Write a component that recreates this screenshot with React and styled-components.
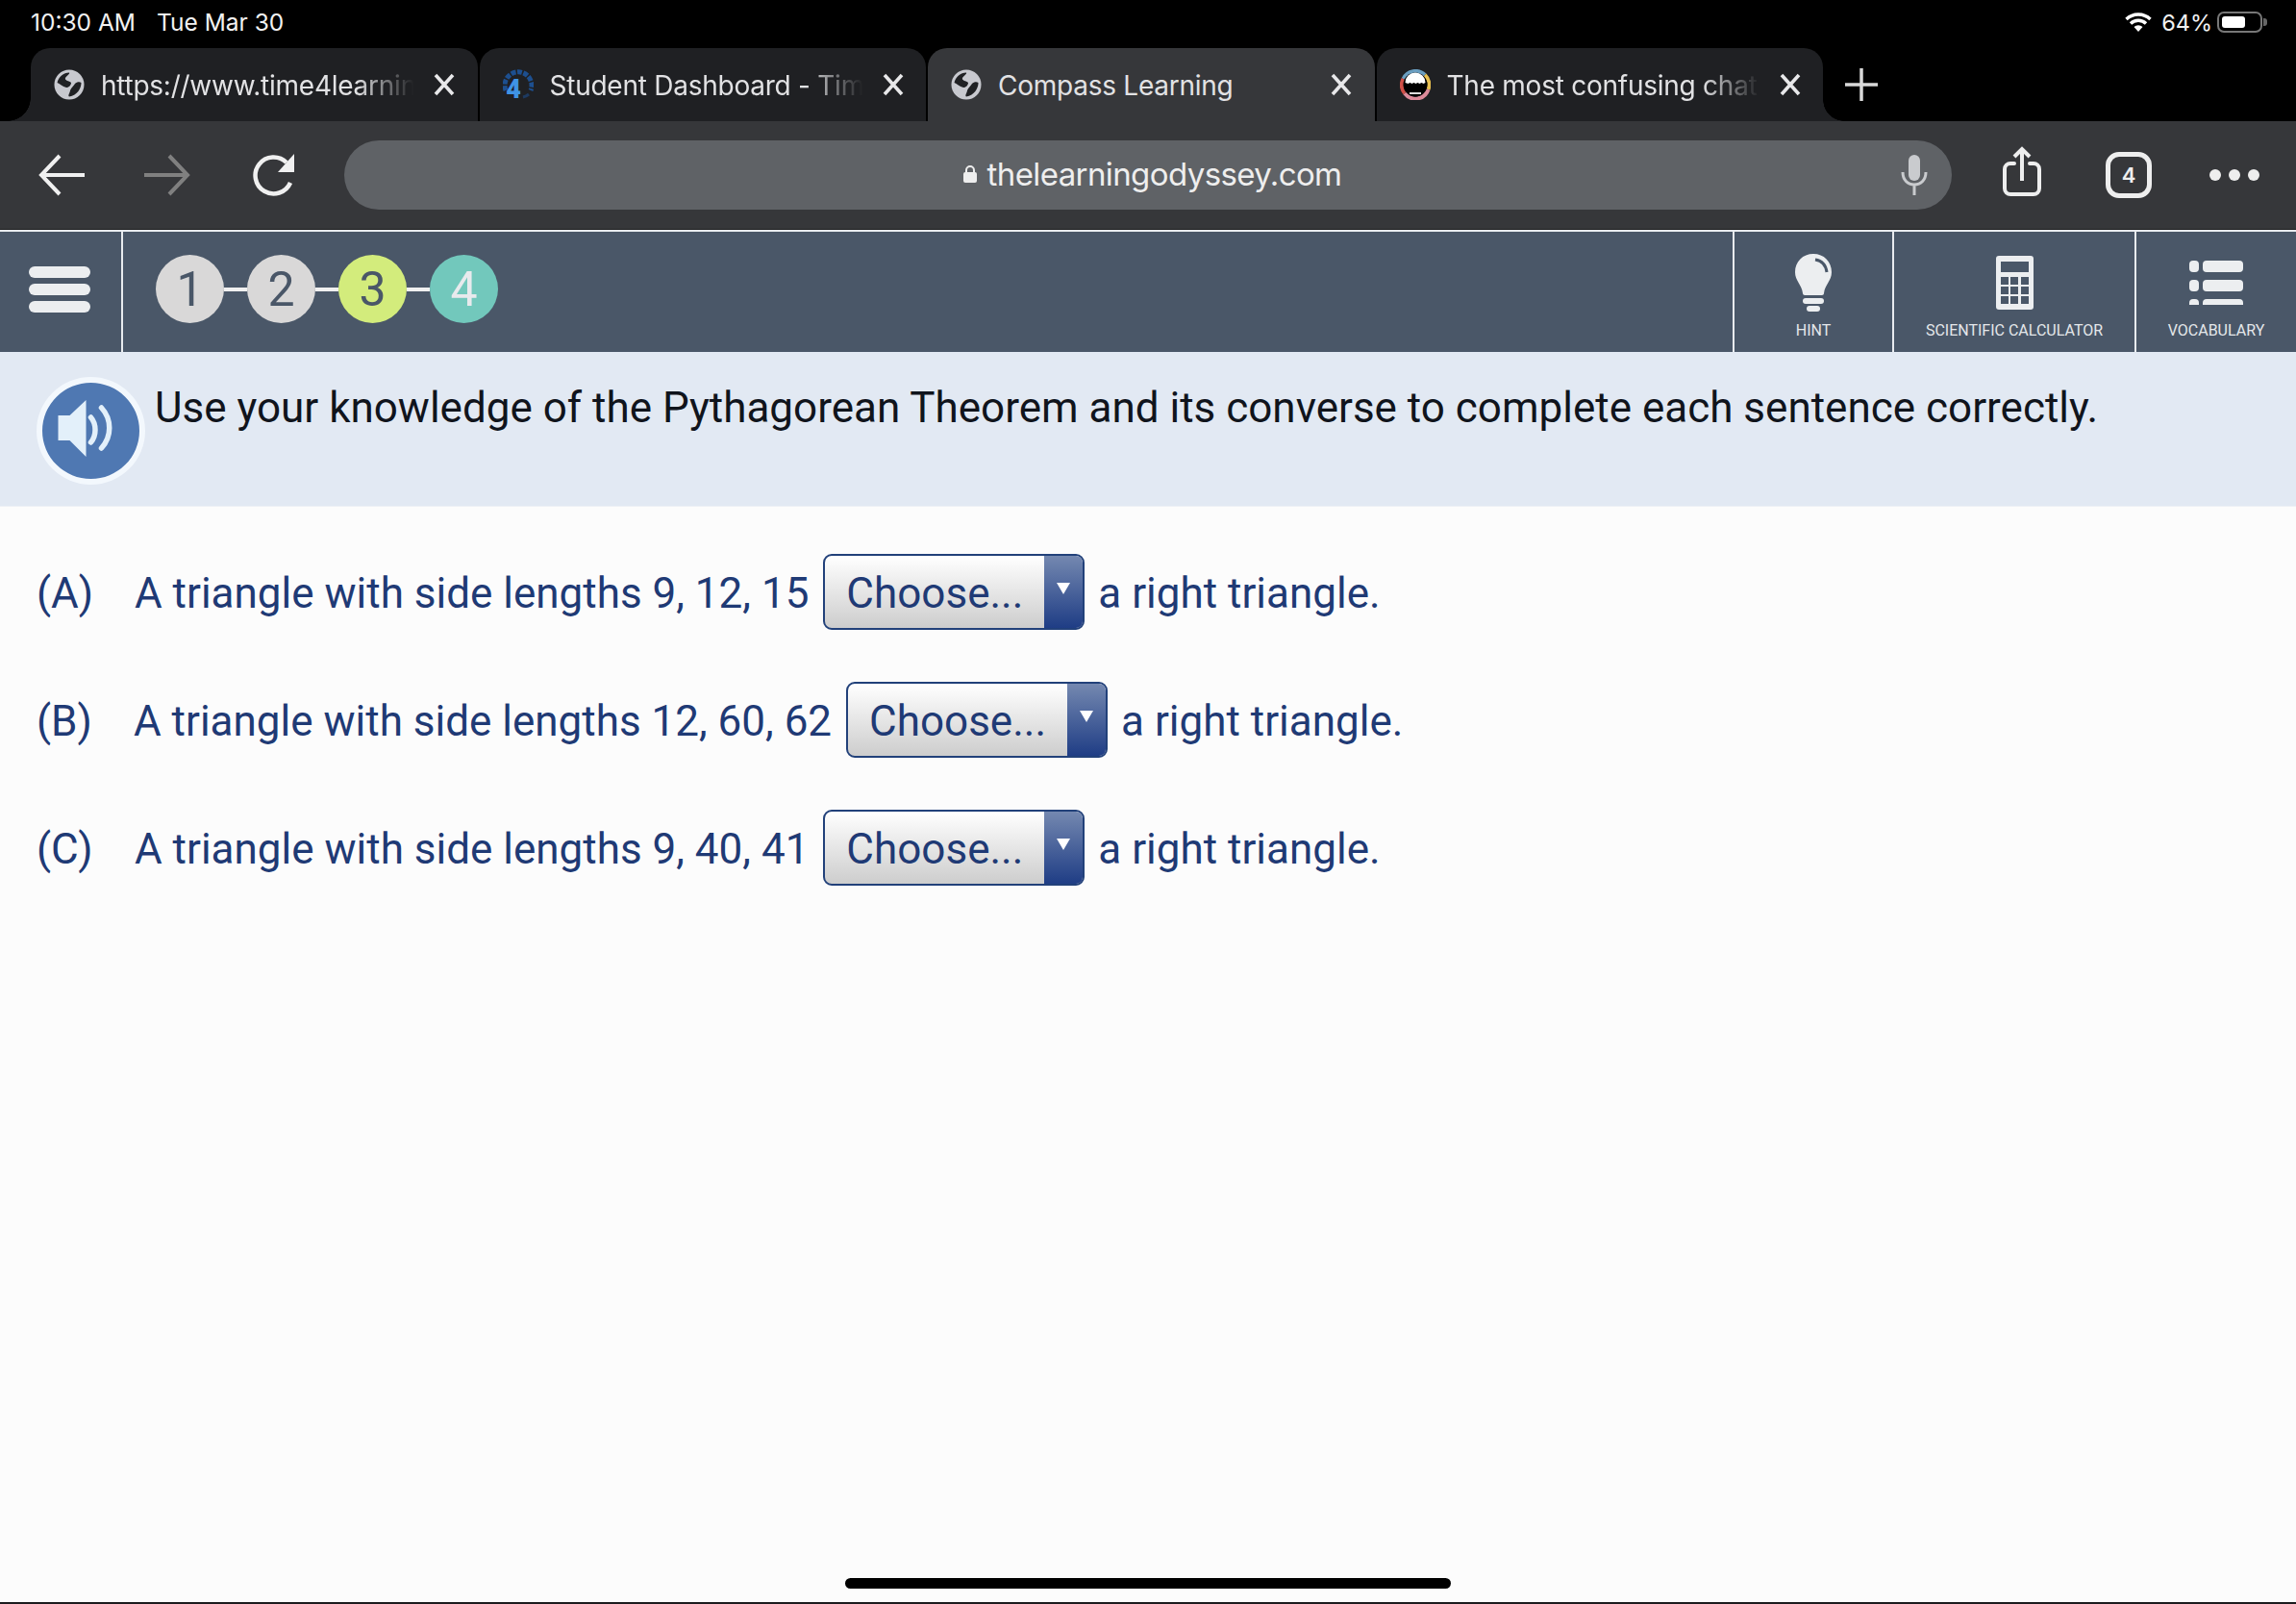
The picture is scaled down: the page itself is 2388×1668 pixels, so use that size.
import React from 'react';
import styled, { createGlobalStyle } from 'styled-components';

const GlobalStyle = createGlobalStyle`
  html, body {
    margin: 0;
    padding: 0;
    background: #000;
  }
  * {
    box-sizing: border-box;
  }
`;

const Page = styled.div`
  position: relative;
  width: 2388px;
  height: 1668px;
  display: flex;
  flex-direction: column;
  overflow: hidden;
  background: #fcfcfc;
  border-bottom: 2px solid #1c1c1e;
`;

const StatusBar = styled.div`
  height: 50px;
  padding: 0 30px 4px 32px;
  display: flex;
  align-items: center;
  justify-content: space-between;
  background: #000;
  color: #f2f2f2;
  font: 400 24.5px Inter, sans-serif;
`;

const StatusLeft = styled.div`
  display: flex;
  gap: 22px;
`;

const StatusRight = styled.div`
  display: flex;
  align-items: center;
  font-size: 23.5px;
`;

const BatteryLevelText = styled.span`
  margin: 0 5px 0 10px;
`;

const Battery = styled.div`
  width: 47px;
  height: 22px;
  padding: 3px;
  border: 2px solid #777;
  border-radius: 7px;
`;

const BatteryLevel = styled.div`
  height: 100%;
  width: 64%;
  background: #fff;
  border-radius: 3px;
`;

const BatteryNub = styled.div`
  width: 4px;
  height: 8px;
  margin-left: 1px;
  border-radius: 0 3px 3px 0;
  background: #666;
`;

const TabStrip = styled.div`
  height: 76px;
  padding-left: 32px;
  display: flex;
  align-items: stretch;
  background: #000;
`;

const Tab = styled.div`
  position: relative;
  width: 464.5px;
  margin-right: 2px;
  display: flex;
  align-items: center;
  padding: 0 0 0 24px;
  border-radius: 20px 20px 0 0;
  background: ${p => (p.$active ? '#36373a' : '#1f2023')};
  color: #e2e2e4;
  font: 400 28px Inter, sans-serif;
  letter-spacing: -0.25px;

  &:first-child::before {
    content: '';
    position: absolute;
    left: -24px;
    bottom: 0;
    width: 24px;
    height: 24px;
    background: radial-gradient(circle at 0 0, transparent 23.5px, #1f2023 24px);
  }

  &:nth-child(4)::after {
    content: '';
    position: absolute;
    right: -22px;
    bottom: 0;
    width: 22px;
    height: 22px;
    background: radial-gradient(circle at 100% 0, transparent 21.5px, #1f2023 22px);
  }
`;

const TabTitle = styled.div`
  width: 332px;
  margin-left: 17px;
  padding-top: 1px;
  white-space: nowrap;
  overflow: hidden;
  -webkit-mask-image: ${p =>
    p.$fade ? 'linear-gradient(to right, #000 80%, transparent 98%)' : 'none'};
`;

const TabClose = styled.svg`
  width: 24px;
  height: 24px;
  margin-left: 13px;
`;

const NewTab = styled.svg`
  width: 34px;
  height: 34px;
  margin: auto 0 auto 21px;
`;

const Toolbar = styled.div`
  height: 113px;
  display: flex;
  align-items: center;
  background: #36373a;
  border-bottom: 1px solid #1c1d1f;
  padding-left: 40px;
`;

const ToolIcon = styled.svg`
  flex-shrink: 0;
  display: block;
  margin-left: ${p => p.$left || 0}px;
`;

const UrlBar = styled.div`
  width: 1672px;
  height: 72px;
  margin: 0 53px 0 50px;
  padding-right: 25px;
  display: flex;
  align-items: center;
  border-radius: 36px;
  background: #5f6266;
  color: #eeeeee;
  font: 400 33px Inter, sans-serif;
  letter-spacing: -0.6px;
`;

const UrlText = styled.div`
  flex: 1;
  display: flex;
  align-items: center;
  justify-content: center;
  gap: 10px;
  padding: 0 0 3px 61px;
`;

const TabCount = styled.div`
  width: 48px;
  height: 48px;
  margin: 0 60px 0 67px;
  display: flex;
  align-items: center;
  justify-content: center;
  border: 5px solid #eeeeee;
  border-radius: 14px;
  color: #eeeeee;
  font: 600 22px Inter, sans-serif;
`;

const NavBar = styled.div`
  height: 127px;
  display: flex;
  align-items: stretch;
  background: #4a5768;
  border-top: 2px solid #e8ebef;
  color: #e8eaed;
`;

const MenuCell = styled.div`
  width: 128px;
  padding: 0 0 5px 30px;
  display: flex;
  flex-direction: column;
  justify-content: center;
  gap: 6px;
  border-right: 2px solid #e8ebef;
`;

const MenuBar = styled.div`
  width: 64px;
  height: 12px;
  border-radius: 6px;
  background: #eceef0;
`;

const Steps = styled.div`
  flex: 1;
  padding: 0 0 6px 34px;
  display: flex;
  align-items: center;
`;

const Step = styled.div`
  width: 71px;
  height: 71px;
  border-radius: 50%;
  display: flex;
  align-items: center;
  justify-content: center;
  background: ${p => p.$bg};
  color: ${p => p.$fg};
  font: 400 50px Roboto, sans-serif;
`;

const StepLine = styled.div`
  width: 24px;
  height: 4px;
  background: #f0f0f0;
`;

const NavItem = styled.div`
  width: ${p => p.$width}px;
  display: flex;
  flex-direction: column;
  align-items: center;
  border-left: 2px solid #e8ebef;
  padding-top: ${p => p.$top}px;
  color: #e4e7ea;
  font: 400 16px Roboto, sans-serif;
`;

const NavLabel = styled.div`
  margin-top: auto;
  margin-bottom: 13px;
`;

const Banner = styled.div`
  height: 161px;
  padding: 26px 0 0 38px;
  display: flex;
  align-items: flex-start;
  gap: 10px;
  background: #e2e9f3;
  border-bottom: 1px solid #eef1f6;
`;

const SpeakerButton = styled.div`
  width: 113px;
  height: 112px;
  flex-shrink: 0;
  border-radius: 50%;
  border: 6px solid #f3f8fd;
  background: #4f78b2;
`;

const Instruction = styled.div`
  padding-top: 6px;
  color: #10141c;
  font: 400 44px/1.2 Roboto, sans-serif;
`;

const Questions = styled.div`
  flex: 1;
  padding: 49px 0 0 38px;
  display: flex;
  flex-direction: column;
  gap: 54px;
`;

const Row = styled.div`
  height: 79px;
  display: flex;
  align-items: center;
  color: #1f3a75;
  font: 400 44px Roboto, sans-serif;
`;

const RowText = styled.span`
  padding-top: 2px;
`;

const RowLabel = styled(RowText)`
  width: ${p => p.$width}px;
`;

const Select = styled.div`
  width: 272px;
  height: 79px;
  margin: 0 14px 0 15px;
  display: flex;
  align-items: stretch;
  overflow: hidden;
  border: 2px solid #22417a;
  border-radius: 9px;
  background: linear-gradient(#ffffff, #cdcdcd);
`;

const SelectValue = styled.div`
  flex: 1;
  padding: 2px 0 0 22px;
  display: flex;
  align-items: center;
`;

const SelectArrow = styled.div`
  width: 40px;
  display: flex;
  justify-content: center;
  padding-top: 28px;
  background: linear-gradient(#7488b0, #1f3d85);

  &::after {
    content: '';
    width: 0;
    height: 0;
    border-left: 7px solid transparent;
    border-right: 7px solid transparent;
    border-top: 12px solid #fff;
  }
`;

const HomeIndicator = styled.div`
  position: absolute;
  left: 879px;
  bottom: 14px;
  width: 630px;
  height: 11px;
  border-radius: 6px;
  background: #000;
`;

const GlobeIcon = () => (
  <svg width="32" height="32" viewBox="0 0 32 32">
    <circle cx="16" cy="16" r="15.500" fill="#c8c9cf" />
    <path d="M3.500 14C5 8 10 3.500 16 3.500c1 1.500-3 3.500-4 5.500-1 3 4 3 6 5 0 3-3 5-5 5-4-1-7-4-9.500-5z" fill="#202124" />
    <path d="M28.500 14c0 6-4 13-12.500 14.500-2-1 1-4.500 1-6.500 1-3 4-5 5-7 2-2 5-2 6.500-1z" fill="#202124" />
  </svg>
);

const CloseIcon = () => (
  <TabClose viewBox="0 0 24 24">
    <path d="M3 2l18 20M21 2L3 22" stroke="#e8e8ea" strokeWidth="3.600" fill="none" />
  </TabClose>
);

const DashboardIcon = () => (
  <svg width="32" height="32" viewBox="0 0 32 32">
    <path d="M3 22A14 14 0 1 1 29 22" fill="none" stroke="#1d4f8f" strokeWidth="5" strokeDasharray="5 1.500" />
    <path d="M27 26a14 14 0 0 1-6 3" fill="none" stroke="#1d3a60" strokeWidth="3" />
    <text x="11" y="30" fontFamily="Roboto" fontWeight="900" fontSize="27" fill="#3f93e4" textAnchor="middle">4</text>
  </svg>
);

const ChatIcon = () => (
  <svg width="32" height="32" viewBox="0 0 32 32">
    <path d="M3.500 10A14 14 0 0 1 26 6" fill="none" stroke="#6a9ec0" strokeWidth="4" />
    <path d="M26 6a14 14 0 0 1 3.500 15" fill="none" stroke="#e8c050" strokeWidth="4" />
    <path d="M29.500 21A14 14 0 0 1 5 25" fill="none" stroke="#dc8a9a" strokeWidth="4" />
    <path d="M5 25a14 14 0 0 1-1.500-15" fill="none" stroke="#d05048" strokeWidth="4" />
    <circle cx="16" cy="16" r="12.500" fill="#000" />
    <path d="M5.500 14a10.500 10.500 0 0 1 21 0l-2 1-2-1-2 1-2-1-2 1-2-1-2 1-2-1-2 1z" fill="#fff" />
    <path d="M10 24h12v2H10z" fill="#ddd" />
  </svg>
);

const WifiIcon = () => (
  <svg width="28" height="20" viewBox="0 0 28 20">
    <path d="M1.500 7a18 18 0 0 1 25 0M6 11.500a11.500 11.500 0 0 1 16 0" fill="none" stroke="#fff" strokeWidth="3.400" />
    <path d="M9.500 15a6.500 6.500 0 0 1 9 0L14 20z" fill="#fff" />
  </svg>
);

const LockIcon = () => (
  <svg width="16" height="20" viewBox="0 0 16 20">
    <path d="M4 9V6a4 4 0 0 1 8 0v3" fill="none" stroke="#eee" strokeWidth="2" />
    <rect x="1" y="8" width="14" height="11" rx="2" fill="#eee" />
  </svg>
);

const SpeakerIcon = () => (
  <svg width="101" height="100" viewBox="0 0 100 100">
    <path d="M16 34h12l17-16v59L28 60H16z" fill="#e3f0fa" />
    <path d="M50 36c6 7 6 19 0 26M61 26c11 12 11 30 0 42" fill="none" stroke="#e3f0fa" strokeWidth="5.500" strokeLinecap="round" />
  </svg>
);

const BulbIcon = () => (
  <svg width="38" height="60" viewBox="0 0 38 60">
    <path d="M19 0C8 0 0 8 0 19c0 9 7 13 8 22 0 1 1 2 2 2h18c1 0 2-1 2-2 1-9 8-13 8-22C38 8 30 0 19 0z" fill="#eceef0" />
    <path d="M21 6c7 1 11 6 12 13" fill="none" stroke="#4a5768" strokeWidth="3" />
    <rect x="8" y="46" width="22" height="6" rx="3" fill="#eceef0" />
    <rect x="12" y="54" width="14" height="6" rx="3" fill="#eceef0" />
  </svg>
);

const CalculatorIcon = () => (
  <svg width="39" height="56" viewBox="0 0 39 56">
    <rect width="39" height="56" rx="3" fill="#eceef0" />
    <rect x="5" y="6" width="29" height="11" fill="#4a5768" />
    {[22, 32, 42].map(y =>
      [5, 15, 26].map(x => <rect key={`${x}-${y}`} x={x} y={y} width="8" height="8" fill="#4a5768" />)
    )}
  </svg>
);

const VocabularyIcon = () => (
  <svg width="56" height="46" viewBox="0 0 56 46">
    {[0, 20, 40].map(y => (
      <g key={y} fill="#eceef0">
        <rect x="0" y={y} width="10" height="12" rx="4" />
        <rect x="14" y={y} width="42" height="12" rx="4" />
      </g>
    ))}
  </svg>
);

const tabs = [
  { title: 'https://www.time4learning.com', icon: <GlobeIcon />, fade: true },
  { title: 'Student Dashboard - Time4Learning', icon: <DashboardIcon />, fade: true },
  { title: 'Compass Learning', icon: <GlobeIcon />, active: true },
  { title: 'The most confusing chat ever', icon: <ChatIcon />, fade: true },
];

const steps = [
  { n: 1, bg: '#d9d8d8', fg: '#4a5768' },
  { n: 2, bg: '#d9d8d8', fg: '#4a5768' },
  { n: 3, bg: '#d3ec7c', fg: '#4a5768' },
  { n: 4, bg: '#72c8bc', fg: '#e8eaed' },
];

const questions = [
  { label: '(A)', text: 'A triangle with side lengths 9, 12, 15', labelWidth: 102 },
  { label: '(B)', text: 'A triangle with side lengths 12, 60, 62', labelWidth: 101 },
  { label: '(C)', text: 'A triangle with side lengths 9, 40, 41', labelWidth: 102 },
];

const App = () => (
  <Page>
    <GlobalStyle />
    <StatusBar>
      <StatusLeft>
        <span>10:30 AM</span>
        <span>Tue Mar 30</span>
      </StatusLeft>
      <StatusRight>
        <WifiIcon />
        <BatteryLevelText>64%</BatteryLevelText>
        <Battery>
          <BatteryLevel />
        </Battery>
        <BatteryNub />
      </StatusRight>
    </StatusBar>

    <TabStrip>
      {tabs.map(tab => (
        <Tab key={tab.title} $active={tab.active}>
          {tab.icon}
          <TabTitle $fade={tab.fade}>{tab.title}</TabTitle>
          <CloseIcon />
        </Tab>
      ))}
      <NewTab viewBox="0 0 34 34">
        <path d="M17 0v34M0 17h34" stroke="#d8d8d8" strokeWidth="3.500" />
      </NewTab>
    </TabStrip>

    <Toolbar>
      <ToolIcon width="48" height="44" viewBox="0 0 48 44">
        <path d="M22 2L3 22l19 20M3 22h45" fill="none" stroke="#f0f0f0" strokeWidth="4" />
      </ToolIcon>
      <ToolIcon $left={62} width="48" height="44" viewBox="0 0 48 44">
        <path d="M26 2l19 20-19 20M45 22H0" fill="none" stroke="#808080" strokeWidth="4" />
      </ToolIcon>
      <ToolIcon $left={64} width="46" height="44" viewBox="0 0 46 44">
        <path d="M36 9A19 19 0 1 0 40 30" fill="none" stroke="#f0f0f0" strokeWidth="4.500" />
        <path d="M44 0v19H27z" fill="#f0f0f0" />
      </ToolIcon>
      <UrlBar>
        <UrlText>
          <LockIcon />
          <span>thelearningodyssey.com</span>
        </UrlText>
        <svg width="28" height="42" viewBox="0 0 28 42">
          <rect x="8" y="0" width="12" height="27" rx="6" fill="#c9cbce" />
          <path d="M2 18c0 8 5 13 12 13s12-5 12-13M14 31v11" fill="none" stroke="#c9cbce" strokeWidth="3" />
        </svg>
      </UrlBar>
      <ToolIcon width="40" height="60" viewBox="0 0 40 60">
        <path d="M12 18H8a6 6 0 0 0-6 6v20a6 6 0 0 0 6 6h24a6 6 0 0 0 6-6V24a6 6 0 0 0-6-6h-4" fill="none" stroke="#eeeeee" strokeWidth="4" strokeLinecap="round" />
        <path d="M20 36V3M12 11l8-8 8 8" fill="none" stroke="#eeeeee" strokeWidth="4" />
      </ToolIcon>
      <TabCount>4</TabCount>
      <ToolIcon width="53" height="14" viewBox="0 0 53 14">
        <circle cx="6" cy="7" r="6" fill="#eeeeee" />
        <circle cx="26" cy="7" r="6" fill="#eeeeee" />
        <circle cx="46" cy="7" r="6" fill="#eeeeee" />
      </ToolIcon>
    </Toolbar>

    <NavBar>
      <MenuCell>
        <MenuBar />
        <MenuBar />
        <MenuBar />
      </MenuCell>
      <Steps>
        {steps.map((step, index) => (
          <React.Fragment key={step.n}>
            {index > 0 && <StepLine />}
            <Step $bg={step.bg} $fg={step.fg}>{step.n}</Step>
          </React.Fragment>
        ))}
      </Steps>
      <NavItem $width={166} $top={23}>
        <BulbIcon />
        <NavLabel>HINT</NavLabel>
      </NavItem>
      <NavItem $width={252} $top={25}>
        <CalculatorIcon />
        <NavLabel>SCIENTIFIC CALCULATOR</NavLabel>
      </NavItem>
      <NavItem $width={168} $top={30}>
        <VocabularyIcon />
        <NavLabel>VOCABULARY</NavLabel>
      </NavItem>
    </NavBar>

    <Banner>
      <SpeakerButton>
        <SpeakerIcon />
      </SpeakerButton>
      <Instruction>
        Use your knowledge of the Pythagorean Theorem and its converse to complete each sentence correctly.
      </Instruction>
    </Banner>

    <Questions>
      {questions.map(q => (
        <Row key={q.label}>
          <RowLabel $width={q.labelWidth}>{q.label}</RowLabel>
          <RowText>{q.text}</RowText>
          <Select>
            <SelectValue>Choose...</SelectValue>
            <SelectArrow />
          </Select>
          <RowText>a right triangle.</RowText>
        </Row>
      ))}
    </Questions>

    <HomeIndicator />
  </Page>
);

export default App;
